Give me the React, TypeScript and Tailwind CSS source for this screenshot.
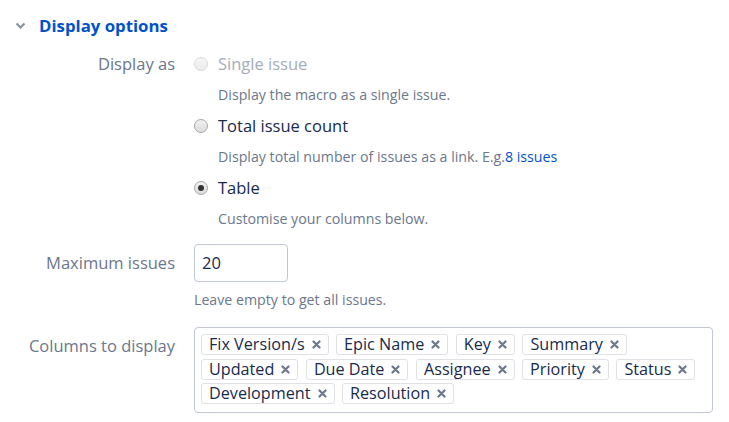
import React from "react";

const tags = [
  ["Fix Version/s", "Epic Name", "Key", "Summary"],
  ["Updated", "Due Date", "Assignee", "Priority", "Status"],
  ["Development", "Resolution"],
];

function XIcon() {
  return (
    <svg width="9" height="9" viewBox="0 0 9 9" className="shrink-0">
      <path d="M1.5 1.5 L7.5 7.5 M7.5 1.5 L1.5 7.5" stroke="#6b778c" strokeWidth="2.2" strokeLinecap="round" />
    </svg>
  );
}

function Radio({ checked, disabled }: { checked?: boolean; disabled?: boolean }) {
  return (
    <span
      className={
        "relative inline-flex h-[14px] w-[14px] shrink-0 items-center justify-center rounded-full border " +
        (disabled
          ? "border-[#d9d9d9] bg-gradient-to-b from-[#f6f6f6] to-[#ebebeb]"
          : "border-[#a8a8a8] bg-gradient-to-b from-[#f2f2f2] to-[#dcdcdc]")
      }
    >
      {checked && <span className="h-[6px] w-[6px] rounded-full bg-[#333]" />}
    </span>
  );
}

function Option({
  label,
  desc,
  checked,
  disabled,
}: {
  label: string;
  desc: React.ReactNode;
  checked?: boolean;
  disabled?: boolean;
}) {
  return (
    <div className="flex flex-col">
      <div className="flex h-6 items-center gap-[10px]">
        <Radio checked={checked} disabled={disabled} />
        <span className={"text-[16.5px] " + (disabled ? "text-[#a5adba]" : "text-[#172b4d]")}>{label}</span>
      </div>
      <div className="mt-[9px] h-5 pl-[24px] text-[14.2px] leading-5 text-[#6b778c]">{desc}</div>
    </div>
  );
}

export default function App() {
  return (
    <div
      className="h-[422px] w-[729px] bg-white"
      style={{ fontFamily: '"Open Sans", "Noto Sans", sans-serif' }}
    >
      <div className="flex h-[52px] items-center gap-[13px] pl-[15px]">
        <svg width="11" height="8" viewBox="0 0 11 8">
          <path d="M1.5 1.5 L5.5 5.5 L9.5 1.5" stroke="#8993a4" strokeWidth="2.2" fill="none" />
        </svg>
        <span className="text-[16.8px] font-bold text-[#0052cc]">Display options</span>
      </div>

      <div className="grid grid-cols-[175px_1fr] gap-x-[19px]">
        <div className="flex h-6 items-center justify-end text-[16.5px] text-[#6b778c]">Display as</div>
        <div className="flex flex-col gap-[9px]">
          <Option label="Single issue" desc="Display the macro as a single issue." disabled />
          <Option
            label="Total issue count"
            desc={
              <>
                Display total number of issues as a link. E.g.<span className="text-[#0052cc]">8 issues</span>
              </>
            }
          />
          <Option label="Table" desc="Customise your columns below." checked />
        </div>

        <div className="mt-[15px] flex h-[38px] items-center justify-end text-[16.5px] text-[#6b778c]">
          Maximum issues
        </div>
        <div className="mt-[15px] flex flex-col">
          <div className="flex h-[38px] w-[94px] items-center rounded-[4px] border border-[#c1c7d0] px-[7px] text-[16.5px] text-[#172b4d]">
            20
          </div>
          <div className="mt-[8px] h-5 text-[14.2px] leading-5 text-[#6b778c]">Leave empty to get all issues.</div>
        </div>

        <div className="mt-[24px] flex h-6 items-center justify-end text-[16.5px] text-[#6b778c]">
          Columns to display
        </div>
        <div className="mt-[17px] w-[519px] rounded-[4px] border border-[#c1c7d0] px-[6px] pb-[8px] pt-[6px]">
          <div className="flex flex-col gap-[3.5px]">
            {tags.map((row, i) => (
              <div key={i} className="flex gap-[7.5px]">
                {row.map((t) => (
                  <span
                    key={t}
                    className="flex h-[21px] items-center gap-[7px] rounded-[3px] border border-[#dfe1e6] pl-[7px] pr-[7px] text-[16.2px] text-[#172b4d]"
                  >
                    {t}
                    <XIcon />
                  </span>
                ))}
              </div>
            ))}
          </div>
        </div>
      </div>
    </div>
  );
}
